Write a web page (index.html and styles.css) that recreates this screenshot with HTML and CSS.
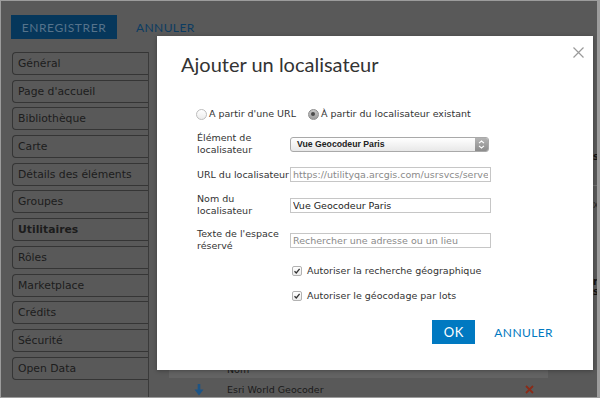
FILE: index.html
```html
<!DOCTYPE html>
<html lang="fr">
<head>
  <meta charset="UTF-8" />
  <meta name="viewport" content="width=device-width, initial-scale=1.0"/>
  <title>Utilitaires</title>
  <link rel="stylesheet" href="styles.css">
</head>
<body>
<div class="frame">
  <div class="toolbar">
    <button class="btn-save">ENREGISTRER</button>
    <button class="btn-link">ANNULER</button>
  </div>

  <div class="layout">
    <ul class="nav">
      <li>Général</li>
      <li>Page d'accueil</li>
      <li>Bibliothèque</li>
      <li>Carte</li>
      <li>Détails des éléments</li>
      <li>Groupes</li>
      <li class="active">Utilitaires</li>
      <li>Rôles</li>
      <li>Marketplace</li>
      <li>Crédits</li>
      <li>Sécurité</li>
      <li>Open Data</li>
    </ul>

    <div class="main">
      <div class="content">
        <div class="locators">
          <div class="loc-head"><span></span><span>Nom</span><span></span></div>
          <div class="loc-row">
            <span class="move">
              <svg width="10" height="12" viewBox="0 0 10 12"><path d="M5 0v7" stroke="#1d5485" stroke-width="2.6"/><path d="M0.5 5.5L5 11.5L9.5 5.5Z" fill="#1d5485"/></svg>
            </span>
            <span>Esri World Geocoder</span>
            <span class="remove">
              <svg width="9" height="9" viewBox="0 0 9 9"><path d="M1 1L8 8M8 1L1 8" stroke="#8a2b18" stroke-width="1.8"/></svg>
            </span>
          </div>
        </div>
      </div>
      <div class="aside">
        <div class="frag f1">server</div>
        <div class="rule"></div>
        <div class="frag f2">xp</div>
        <div class="frag f3">r.</div>
        <div class="frag f4">s</div>
      </div>
    </div>
  </div>

  <div class="modal">
    <button class="close">
      <svg width="11" height="11" viewBox="0 0 11 11"><path d="M0.5 0.5L10.5 10.5M10.5 0.5L0.5 10.5" stroke="#9a9a9a" stroke-width="1.2"/></svg>
    </button>
    <h2>Ajouter un localisateur</h2>

    <div class="form">
      <div class="choice">
        <label><span class="radio"></span>A partir d'une URL</label>
        <label><span class="radio on"></span>À partir du localisateur existant</label>
      </div>

      <div class="fields">
        <div class="label">Élément de<br>localisateur</div>
        <div class="select">
          <span>Vue Geocodeur Paris</span>
          <span class="arrows">
            <svg width="7" height="9" viewBox="0 0 7 9"><path d="M1 3.2L3.5 1L6 3.2M1 5.8L3.5 8L6 5.8" fill="none" stroke="#fff" stroke-width="1.1"/></svg>
          </span>
        </div>

        <div class="label nowrap">URL du localisateur</div>
        <input class="input" type="text" disabled value="https://utilityqa.arcgis.com/usrsvcs/servers/geocode">

        <div class="label">Nom du<br>localisateur</div>
        <input class="input" type="text" value="Vue Geocodeur Paris">

        <div class="label">Texte de l'espace<br>réservé</div>
        <input class="input" type="text" placeholder="Rechercher une adresse ou un lieu">
      </div>

      <div class="checks">
        <label class="check"><span class="box"><svg width="8" height="8" viewBox="0 0 8 8"><path d="M1.5 4.2L3.3 6L6.6 1.8" fill="none" stroke="#333" stroke-width="1.3"/></svg></span>Autoriser la recherche géographique</label>
        <label class="check"><span class="box"><svg width="8" height="8" viewBox="0 0 8 8"><path d="M1.5 4.2L3.3 6L6.6 1.8" fill="none" stroke="#333" stroke-width="1.3"/></svg></span>Autoriser le géocodage par lots</label>
      </div>
    </div>

    <div class="footer">
      <button class="btn-ok">OK</button>
      <button class="btn-cancel">ANNULER</button>
    </div>
  </div>
</div>
</body>
</html>
```

FILE: styles.css
```css
* { box-sizing: border-box; }
html, body { margin: 0; }
body { width: 600px; height: 398px; overflow: hidden; background: #595959; font-family: "DejaVu Sans", Verdana, sans-serif; }

.frame { position: relative; width: 600px; height: 398px; border: 1px solid #9c9c9c; border-right-width: 3px; background: #595959; overflow: hidden; }

/* page behind the dialog (already dimmed) */
.toolbar { display: flex; align-items: center; height: 38px; padding: 14px 0 0 10px; }
.btn-save { width: 106px; height: 24px; padding: 0; border: 0; background: #06375b; color: #56738b; font: 12px Lato, sans-serif; letter-spacing: .6px; }
.btn-link { margin-left: 19px; padding: 0; border: 0; background: none; color: #0c3c62; font: 12px Lato, sans-serif; letter-spacing: .4px; }

.layout { display: flex; height: 358px; }
.nav { list-style: none; width: 137px; margin: 13px 0 0 11px; padding: 0; border-right: 1px solid #3a3a3a; }
.nav li { height: 23px; margin-bottom: 4.7px; padding-left: 5px; border: 1px solid #353535; border-right: 0; border-radius: 4px 0 0 4px; color: #1c1c1c; font-size: 10.8px; line-height: 21px; }
.nav li.active { font-weight: 600; }

.main { flex: 1; display: flex; }
.content { flex: 1; display: flex; flex-direction: column; justify-content: flex-end; padding-left: 20px; }
.locators { width: 379px; color: #1a1a1a; font-size: 9.5px; }
.loc-head, .loc-row { display: grid; grid-template-columns: 58px 1fr 40px; align-items: center; }
.loc-head { height: 18px; background: #636363; }
.loc-row { height: 19px; padding-top: 4px; }
.move { display: flex; padding-left: 25px; }
.remove { display: flex; padding-left: 17px; }

.aside { width: 4px; overflow: hidden; white-space: nowrap; color: #111; font-size: 10px; font-weight: bold; line-height: 10px; }
.f1 { margin-top: 113px; }
.rule { margin-top: 23px; border-top: 1px solid #707070; }
.f2 { margin-top: 14px; font-weight: normal; color: #2a2a2a; }
.f3 { margin-top: 67px; }

/* dialog */
.modal { position: absolute; left: 156px; top: 35px; width: 436px; height: 334px; padding-top: 16px; background: #fff; box-shadow: 0 1px 4px rgba(0,0,0,.3); }
.close { position: absolute; left: 416px; top: 11px; display: flex; padding: 0; border: 0; background: none; }
.modal h2 { margin: 0 0 0 24px; color: #333; font: 400 20px/24px Lato, sans-serif; }

.form { margin-top: 32px; padding-left: 40px; color: #333; font-size: 9.5px; }
.choice { display: flex; align-items: center; height: 12px; margin-left: -1px; line-height: 12px; }
.choice label { display: flex; align-items: center; gap: 2px; }
.choice label + label { margin-left: 12px; }
.radio { position: relative; width: 11px; height: 11px; border: 1px solid #bdbdbd; border-radius: 50%; background: linear-gradient(#fff, #ececec); }
.radio.on { border-color: #8e8e8e; background: linear-gradient(#c6c6c6, #9c9c9c); }
.radio.on::after { content: ""; position: absolute; left: 2.5px; top: 2.5px; width: 4px; height: 4px; border-radius: 50%; background: #4a4a4a; }

.fields { display: grid; grid-template-columns: 93px 201px; row-gap: 11px; align-items: center; margin-top: 12px; }
.label { line-height: 12px; }
.nowrap { white-space: nowrap; }
.select { display: flex; align-items: center; justify-content: space-between; width: 199px; height: 15px; padding-left: 6px; border: 1px solid #a9a9a9; border-radius: 3px; background: linear-gradient(#fff, #e8e8e8); color: #222; font: bold 8.7px "Liberation Sans", Arial, sans-serif; }
.arrows { display: flex; align-items: center; justify-content: center; width: 13px; height: 13px; border-radius: 0 2px 2px 0; background: linear-gradient(#b4b4b4, #8c8c8c); }
.input { width: 201px; height: 15px; margin: 0; padding: 0 2px; border: 1px solid #c6c6c6; border-radius: 0; background: #fff; color: #222; font: 9.5px "DejaVu Sans", Verdana, sans-serif; outline: none; }
.input:disabled { color: #8a8a8a; }
.input::placeholder { color: #8a8a8a; }

.checks { margin-top: 13px; padding-left: 95px; }
.check { display: flex; align-items: center; gap: 5px; height: 12px; line-height: 12px; }
.check + .check { margin-top: 13px; }
.box { display: flex; align-items: center; justify-content: center; width: 10px; height: 10px; border: 1px solid #b2b2b2; border-radius: 2px; background: linear-gradient(#fff, #ececec); }

.footer { display: flex; justify-content: flex-end; align-items: center; gap: 19px; margin-top: 18px; padding-right: 40px; }
.btn-ok { width: 43px; height: 24px; padding: 0; border: 0; background: #0079c1; color: #fff; font: 13px Lato, sans-serif; letter-spacing: .5px; }
.btn-cancel { padding: 0; border: 0; background: none; color: #0079c1; font: 12px Lato, sans-serif; letter-spacing: .4px; }
```
